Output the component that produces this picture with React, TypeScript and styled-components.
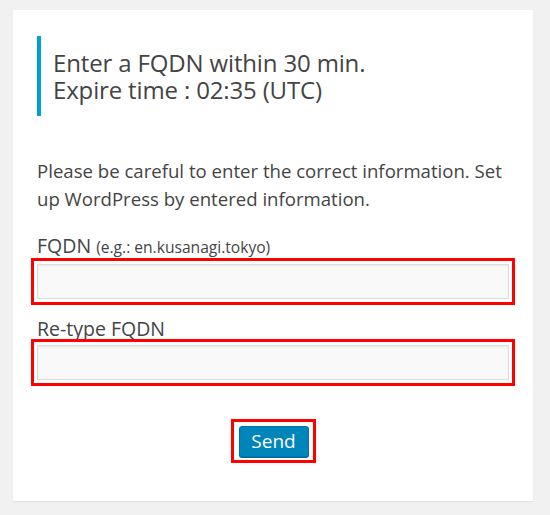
import React from "react";
import styled, { createGlobalStyle } from "styled-components";

const Global = createGlobalStyle`
  html, body { margin: 0; padding: 0; background: #f1f1f1; }
  body { font-family: "Open Sans", "Noto Sans", sans-serif; color: #444; }
  * { box-sizing: border-box; }
`;

const Page = styled.div`
  padding: 10px 17px 14px 13px;
`;

const Card = styled.div`
  background: #fff;
  height: 491px;
  padding: 26px 24px 0 24px;
  box-shadow: 0 1px 1px rgba(0, 0, 0, 0.06);
`;

const Notice = styled.div`
  border-left: 4px solid #00a0d2;
  padding: 13px 0 13px 12px;
  color: #444;
`;

const NoticeLine = styled.div`
  font-size: 24px;
  line-height: 27px;
  height: 27px;
  letter-spacing: -0.15px;
  white-space: nowrap;
`;

const Intro = styled.p`
  margin: 41px 0 0 0;
  font-size: 18.6px;
  line-height: 28px;
`;

const Field = styled.div<{ $top: number }>`
  display: flex;
  flex-direction: column;
  margin-top: ${(p) => p.$top}px;
`;

const Label = styled.label`
  font-size: 19.5px;
  line-height: 21px;
`;

const Hint = styled.span`
  font-size: 15.6px;
`;

const Highlight = styled.div`
  border: 3px solid #ff0000;
  padding: 3px;
  margin: 0 -6px;
`;

const Input = styled.input`
  display: block;
  width: 100%;
  height: 35px;
  background: #f9f9f9;
  border: 1px solid #ddd;
  box-shadow: inset 0 1px 2px rgba(0, 0, 0, 0.07);
  outline: none;
`;

const Actions = styled.div`
  display: flex;
  justify-content: center;
  margin-top: 33px;
`;

const ButtonFrame = styled.div`
  border: 3px solid #ff0000;
  padding: 4px 4px 3px 5px;
`;

const Button = styled.button`
  display: block;
  width: 70px;
  height: 31px;
  background: #0085ba;
  border: 1px solid #0073aa;
  border-radius: 3px;
  box-shadow: 0 1px 0 #006799;
  color: #fff;
  font-family: "Open Sans", "Noto Sans", sans-serif;
  font-size: 19px;
  line-height: 27px;
  padding: 0 0 1px 0;
  cursor: pointer;
`;

export default function App() {
  return (
    <>
      <Global />
      <Page>
        <Card>
          <Notice>
            <NoticeLine>Enter a FQDN within 30 min.</NoticeLine>
            <NoticeLine>Expire time : 02:35 (UTC)</NoticeLine>
          </Notice>
          <Intro>
            Please be careful to enter the correct information. Set up
            WordPress by entered information.
          </Intro>
          <Field $top={22}>
            <Label htmlFor="fqdn">
              FQDN <Hint>(e.g.: en.kusanagi.tokyo)</Hint>
            </Label>
            <Highlight>
              <Input id="fqdn" type="text" />
            </Highlight>
          </Field>
          <Field $top={13}>
            <Label htmlFor="fqdn2">Re-type FQDN</Label>
            <Highlight>
              <Input id="fqdn2" type="text" />
            </Highlight>
          </Field>
          <Actions>
            <ButtonFrame>
              <Button type="button">Send</Button>
            </ButtonFrame>
          </Actions>
        </Card>
      </Page>
    </>
  );
}
